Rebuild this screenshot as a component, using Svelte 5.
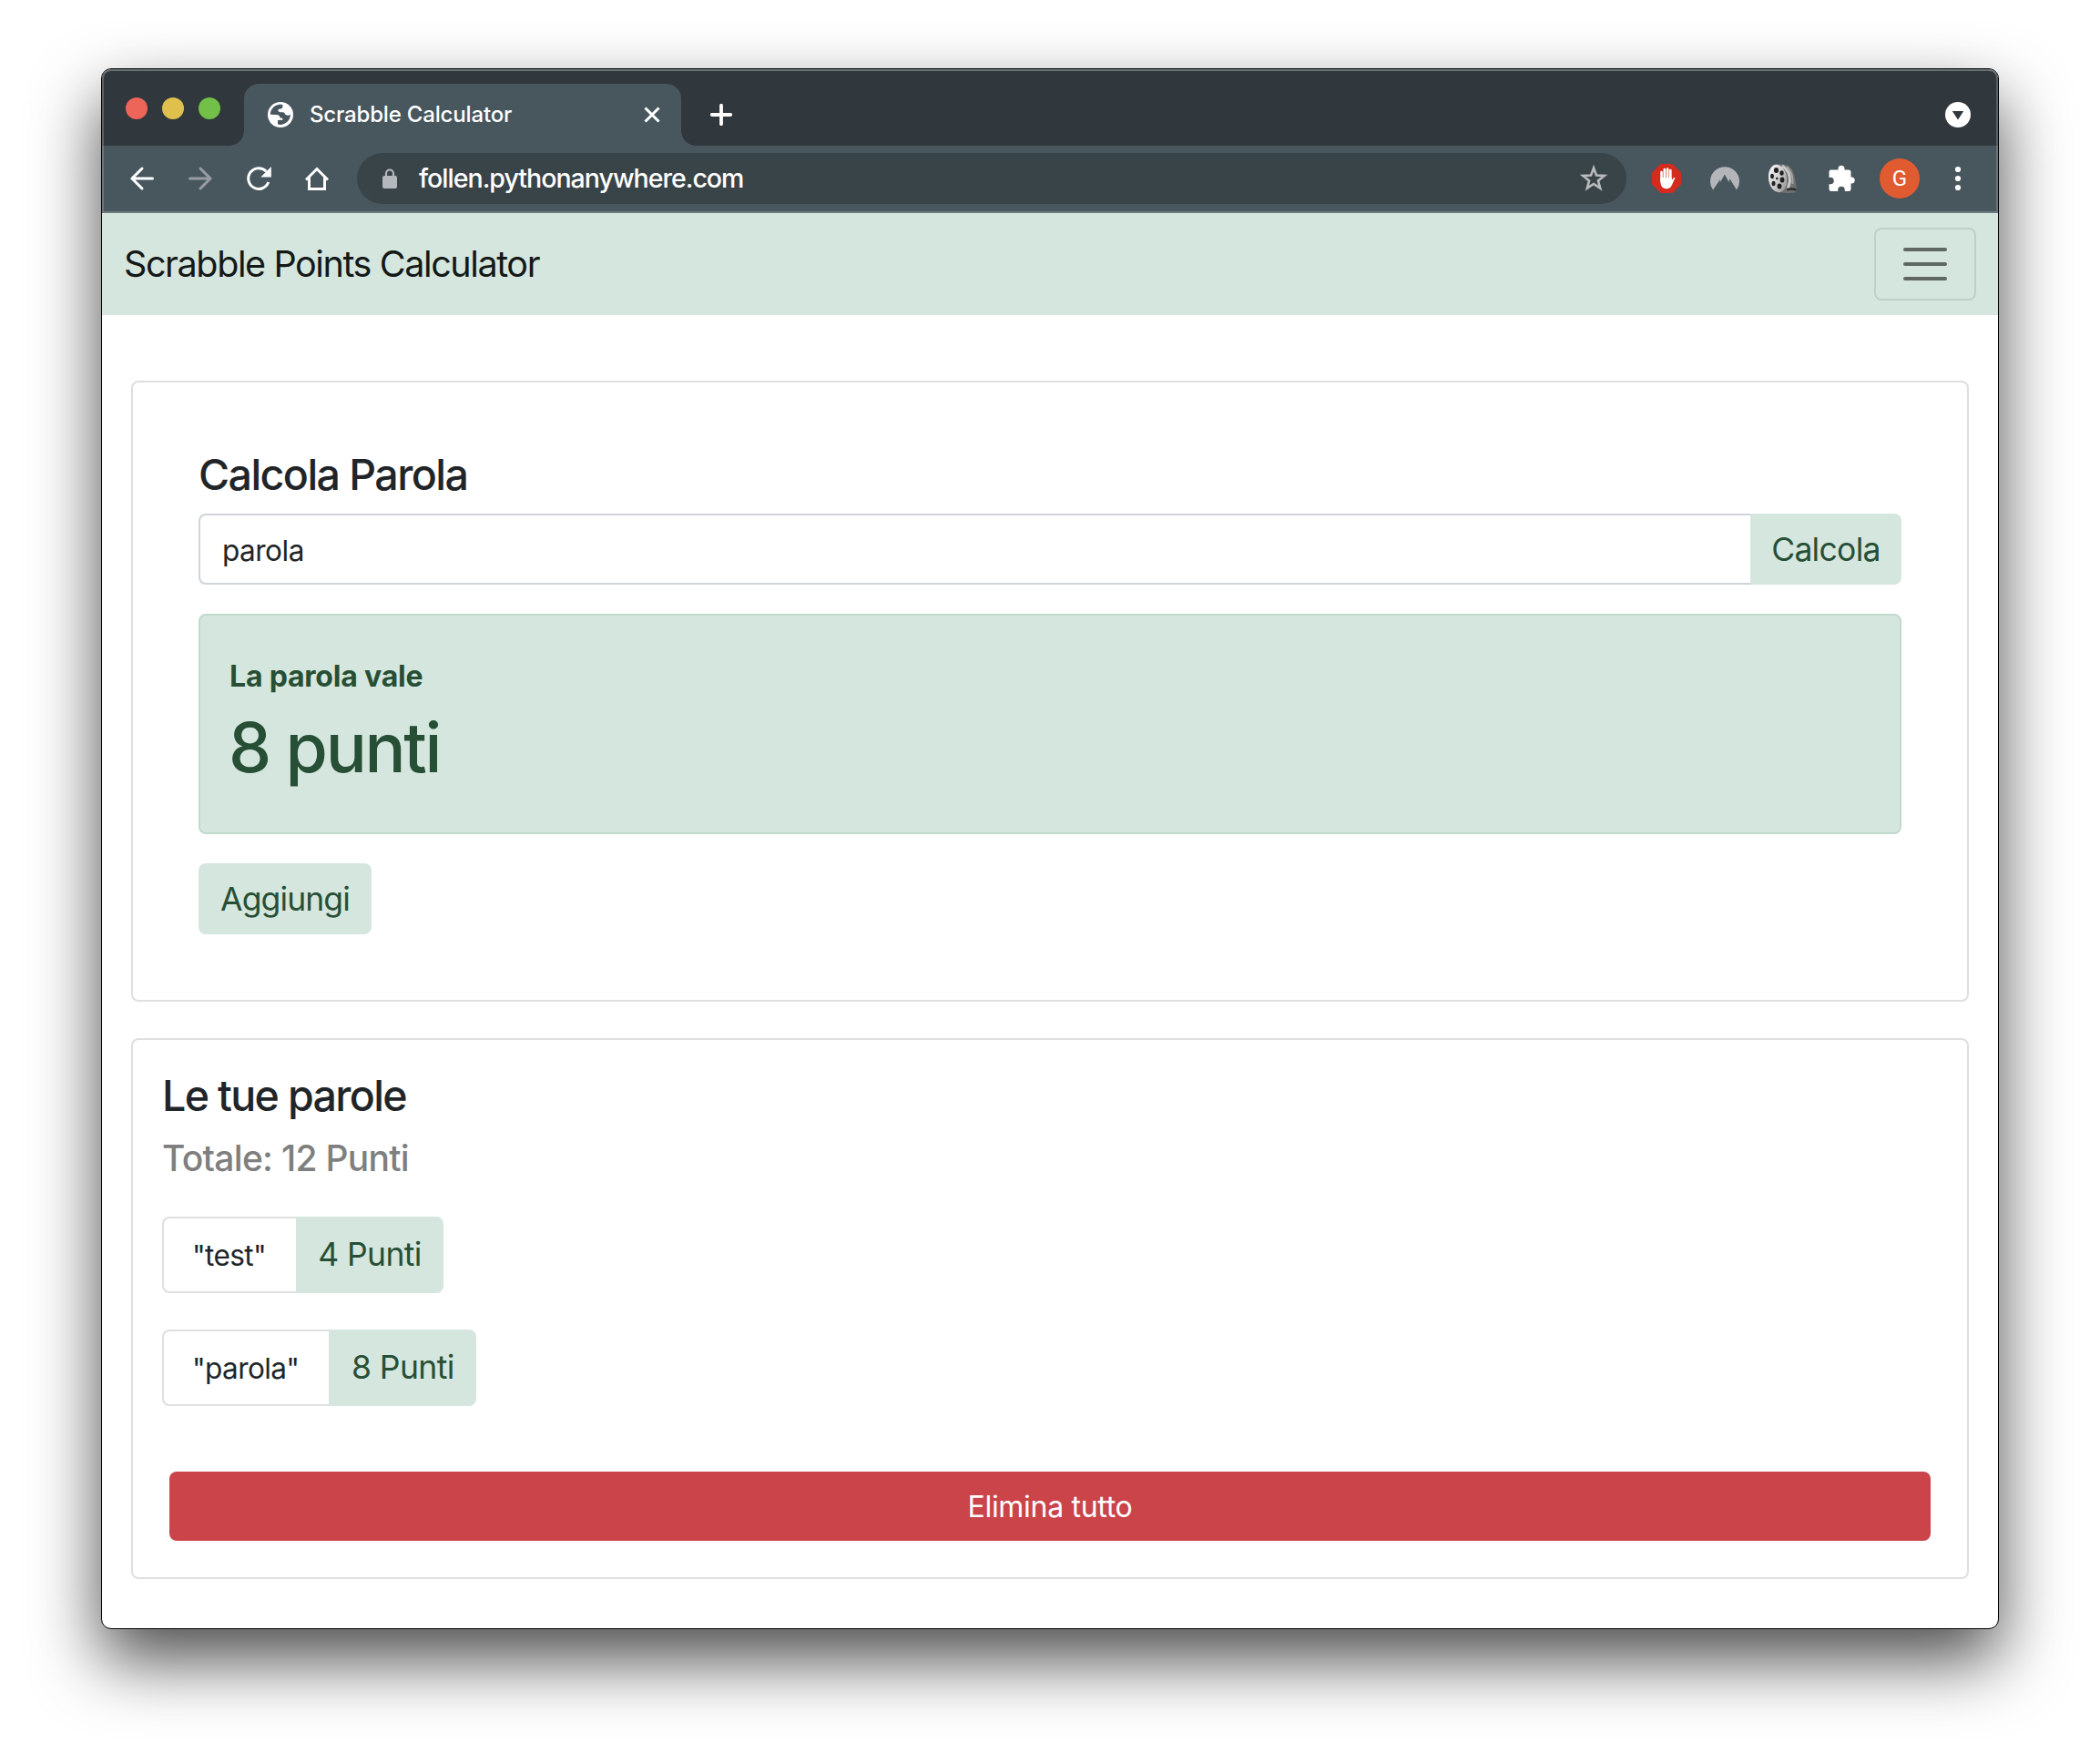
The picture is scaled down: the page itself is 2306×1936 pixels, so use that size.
<script>
  let word = $state('parola');
  const words = [
    { text: 'test', points: 4 },
    { text: 'parola', points: 8 }
  ];
  const total = words.reduce((sum, w) => sum + w.points, 0);
</script>

<div class="desktop">
  <div class="window">
    <header class="tabstrip">
      <div class="lights">
        <i class="close"></i><i class="min"></i><i class="max"></i>
      </div>
      <div class="tab">
        <svg class="globe" width="28" height="28" viewBox="0 0 28 28">
          <circle cx="14" cy="14" r="14" fill="#fff" />
          <path fill="#48565e" d="M10.800 3.200C6 4.400 2.800 9 2.900 13.700L9.500 13.900C12.500 14 13.300 15.200 13.500 17.400L14.800 17.500C16.500 17.700 16.600 18.700 16.400 19.800L11 20.100L11 24.600C18 26.300 24.500 21.500 25 13.800C23.600 14.800 21.300 15.200 19.600 14C18.600 12.800 18.600 11.200 16.600 11.200C14.600 11.400 11.500 11.500 11.400 9.600C11.300 7.600 13.500 7.600 15.600 7.300C16.300 6 16.200 4.300 16.600 3.200C15 2.700 13 2.700 10.800 3.200Z" />
        </svg>
        <span class="tabtitle">Scrabble Calculator</span>
        <svg width="20" height="20" viewBox="0 0 20 20"><path d="M2.500 2.500L17.500 17.500M17.500 2.500L2.500 17.500" stroke="#fff" stroke-width="3" /></svg>
      </div>
      <svg class="plus" width="24" height="24" viewBox="0 0 24 24"><path d="M12 1.800V22.200M1.800 12H22.200" stroke="#fff" stroke-width="3.800" stroke-linecap="round" /></svg>
      <svg class="drop" width="28" height="28" viewBox="0 0 28 28"><circle cx="14" cy="14" r="14" fill="#fff" /><path d="M7.800 10H20.200L14 19.500Z" fill="#30373d" /></svg>
    </header>

    <div class="toolbar">
      <div class="navicons">
        <svg width="32" height="32" viewBox="0 0 32 32" fill="none" stroke="#fff" stroke-width="3" stroke-linecap="round"><path d="M27.500 16H5M16 5L5 16L16 27" /></svg>
        <svg width="32" height="32" viewBox="0 0 32 32" fill="none" stroke="#979da3" stroke-width="3" stroke-linecap="round"><path d="M4.500 16H27M16 5L27 16L16 27" /></svg>
        <svg width="32" height="32" viewBox="0 0 32 32"><path d="M26.800 20A11.400 11.400 0 1 1 24.400 8.200" fill="none" stroke="#fff" stroke-width="3" /><path d="M29.800 3V14.500H18.300Z" fill="#fff" /></svg>
        <svg width="32" height="32" viewBox="0 0 32 32" fill="none" stroke="#fff" stroke-width="3"><path d="M4 17.500L16 5.500L28 17.500M7.500 15V27.500H24.500V15" /></svg>
      </div>
      <div class="omnibox">
        <svg class="lock" width="16" height="22" viewBox="0 0 16 22"><rect y="8" width="16" height="14" rx="2" fill="#b5b8bc" /><path d="M4 9V5.500A4 4 0 0 1 12 5.500V9" fill="none" stroke="#b5b8bc" stroke-width="2.200" /></svg>
        <span class="url">follen.pythonanywhere.com</span>
        <svg class="star" width="30" height="30" viewBox="0 0 30 30"><path d="M15 3.500L18 11.600L26.600 12L19.900 17.400L22.200 25.700L15 21L7.800 25.700L10.100 17.400L3.400 12L12 11.600Z" fill="none" stroke="#b9bbbd" stroke-width="2.600" /></svg>
      </div>
      <div class="extensions">
        <svg width="32" height="32" viewBox="0 0 32 32"><path d="M9.500 0H22.500L32 9.500V22.500L22.500 32H9.500L0 22.500V9.500Z" fill="#d32c1f" /><g stroke="#fff" stroke-linecap="round" stroke-width="2.700"><path d="M10.500 9V19M13.800 6V17M17.100 5.500V17M20.300 7V18" /></g><path d="M9.200 15H21.700V18L23.500 15.400Q25 13.800 25.400 15.600L21.500 24Q19.500 27.500 15.500 27.300Q10.500 27 9.600 21.500Z" fill="#fff" /></svg>
        <svg width="32" height="32" viewBox="0 0 32 32"><path d="M3 28.500A16 16 0 1 1 29 28.500L21.600 16.500L20.500 18.800L21 21L15.900 11.500L12.800 17L10.700 20.500L11 17Z" fill="#b3b5b9" /></svg>
        <svg width="32" height="32" viewBox="0 0 32 32">
          <defs>
            <linearGradient id="reel" x1="0" y1="0" x2="1" y2="1"><stop offset="0" stop-color="#fff" /><stop offset=".5" stop-color="#cfcfcf" /><stop offset="1" stop-color="#8c8c8c" /></linearGradient>
          </defs>
          <path d="M6 1Q15-1 22 2Q28 7 29 16L31 27L28 29L31 31Q22 33 12 31Z" fill="#707070" />
          <path d="M15 2Q24 8 23.500 19L21 28" fill="none" stroke="#c9c9c9" stroke-width="3" />
          <path d="M20 3Q27.500 10 26.500 22" fill="none" stroke="#a8a8a8" stroke-width="1.800" />
          <path d="M20 28Q25 27 30 28" fill="none" stroke="#2d2d2d" stroke-width="2.500" />
          <ellipse cx="10" cy="16" rx="10" ry="15.300" transform="rotate(-8 10 16)" fill="url(#reel)" />
          <g fill="#202020"><ellipse cx="8.500" cy="7" rx="2.600" ry="2.900" /><ellipse cx="14.500" cy="10" rx="2.200" ry="2.800" /><ellipse cx="4" cy="13.500" rx="1.900" ry="2.800" /><ellipse cx="15" cy="17.500" rx="2.400" ry="3.100" /><ellipse cx="5.500" cy="21.500" rx="2" ry="2.800" /><ellipse cx="12" cy="24.500" rx="2.400" ry="2.900" /><circle cx="9.300" cy="16" r="1.300" /></g>
        </svg>
        <svg width="32" height="32" viewBox="0 0 32 32"><path d="M4.500 6.500H12.500V5.200A3.500 3.500 0 0 1 19.500 5.200V6.500H24A2.500 2.500 0 0 1 26.500 9V14.500H27.200A3.500 3.500 0 0 1 27.200 21.500H26.500V27.500A2.500 2.500 0 0 1 24 30H19.800V28.500A3.800 3.800 0 0 0 12.200 28.500V30H5A2.500 2.500 0 0 1 2.500 27.500V22.300H4A3.800 3.800 0 0 0 4 14.700H2.500V8.500A2 2 0 0 1 4.500 6.500Z" fill="#fff" /></svg>
        <span class="avatar">G</span>
        <svg width="32" height="32" viewBox="0 0 32 32" fill="#fff"><circle cx="16" cy="6" r="3.100" /><circle cx="16" cy="16" r="3.100" /><circle cx="16" cy="26" r="3.100" /></svg>
      </div>
    </div>

    <nav class="navbar">
      <span class="brand">Scrabble Points Calculator</span>
      <button class="toggler" aria-label="Menu"><i></i><i></i><i></i></button>
    </nav>

    <main>
      <section class="card calc">
        <h1>Calcola Parola</h1>
        <div class="group">
          <input bind:value={word} aria-label="Parola" />
          <button class="soft">Calcola</button>
        </div>
        <div class="alert">
          <strong>La parola vale</strong>
          <div class="score">8 punti</div>
        </div>
        <button class="soft add">Aggiungi</button>
      </section>

      <section class="card list">
        <h2>Le tue parole</h2>
        <h3>Totale: {total} Punti</h3>
        {#each words as w}
          <div class="word">
            <span class="label">"{w.text}"</span>
            <span class="points">{w.points} Punti</span>
          </div>
        {/each}
        <button class="danger">Elimina tutto</button>
      </section>
    </main>
  </div>
</div>

<style>
  :global(body) { margin: 0; background: #fff; }
  * { box-sizing: border-box; }
  button, input { font: inherit; margin: 0; border: 0; }
  svg { display: block; flex: none; }
  .desktop {
    width: 2306px; height: 1936px; padding: 75px 111px; overflow: hidden;
    font-family: Inter, "Liberation Sans", sans-serif; color: #212529; background: #fff;
  }
  .window {
    width: 2084px; height: 1714px; border: 1px solid #000; border-radius: 11px;
    background: #fff; display: flex; flex-direction: column;
    box-shadow: 0 34px 74px rgba(0, 0, 0, .7);
  }
  .tabstrip {
    height: 84px; background: #30373d; border-radius: 10px 10px 0 0; display: flex; align-items: flex-end;
    box-shadow: inset 0 2px 0 #6b7276, inset 2px 0 0 #5a6166, inset -2px 0 0 #5a6166; padding: 0 30px 0 26px; flex: none;
  }
  .lights { display: flex; gap: 16px; align-self: center; width: 130px; margin-top: 2px; }
  .lights i { width: 24px; height: 24px; border-radius: 50%; }
  .close { background: #ed6459; }
  .min { background: #dfc04c; }
  .max { background: #72c047; }
  .tab {
    position: relative; width: 480px; height: 68px; border-radius: 16px 16px 0 0; background: #48565e;
    display: flex; align-items: center; padding: 0 22px 0 26px;
  }
  .tab::before, .tab::after { content: ""; position: absolute; bottom: 0; width: 16px; height: 16px; }
  .tab::before { left: -16px; background: radial-gradient(circle at 0 0, transparent 15.500px, #48565e 16px); }
  .tab::after { right: -16px; background: radial-gradient(circle at 100% 0, transparent 15.500px, #48565e 16px); }
  .tabtitle { margin-left: 18px; flex: 1; font-size: 24px; line-height: 34px; color: #fff; font-weight: 450; white-space: nowrap; letter-spacing: -.17px; }
  .plus { margin: 0 0 22px 32px; }
  .drop { margin: 0 0 20px auto; }
  .toolbar {
    height: 74px; flex: none; background: #48565e; border-bottom: 2px solid #6f7a81;
    box-shadow: inset 2px 0 0 #6a757c, inset -2px 0 0 #6a757c;
    display: flex; align-items: center; padding: 0 28px;
  }
  .navicons { display: flex; gap: 32px; width: 252px; }
  .omnibox { width: 1394px; height: 56px; border-radius: 28px; background: #394449; display: flex; align-items: center; padding: 0 21px 0 28px; }
  .url { flex: 1; margin-left: 24px; font-size: 28.500px; line-height: 40px; color: #fff; font-weight: 450; letter-spacing: -.98px; }
  .extensions { display: flex; align-items: center; gap: 32px; margin-left: 28px; }
  .avatar {
    width: 44px; height: 44px; margin: 0 -6px; border-radius: 50%; background: #e15b31; color: #fff;
    font: 24px/45px Roboto, sans-serif; text-align: center;
  }
  .navbar { height: 112px; flex: none; background: #d5e6de; display: flex; align-items: center; justify-content: space-between; padding: 0 24px; }
  .brand { font-size: 39.500px; line-height: 60px; color: #141817; letter-spacing: -1.400px; }
  .toggler {
    width: 112px; height: 80px; border: 2px solid #c0cfc8; border-radius: 8px; background: none; padding: 0 30px;
    display: flex; flex-direction: column; justify-content: center; gap: 12px;
  }
  .toggler i { height: 4px; border-radius: 2px; background: #5f6763; }
  main { padding: 72px 32px 0; display: flex; flex-direction: column; gap: 40px; }
  .card { border: 2px solid #dfdfdf; border-radius: 8px; background: #fff; display: flex; flex-direction: column; align-items: flex-start; }
  .calc { height: 682px; padding: 72px; }
  h1, h2, h3 { margin: 0; font-weight: 500; white-space: nowrap; }
  h1 { font-size: 46.500px; line-height: 58px; margin-bottom: 14px; letter-spacing: -1.550px; }
  .group { display: flex; align-self: stretch; height: 78px; }
  input {
    flex: 1; border: 2px solid #ced4da; border-right: 0; border-radius: 8px 0 0 8px; background: #fff;
    padding: 3px 24px 0; font-size: 31.500px; color: #212529; outline: none; letter-spacing: -.5px;
  }
  .soft { background: #d5e6de; color: #264f35; font-size: 35.500px; line-height: 54px; white-space: nowrap; padding: 2px 0 0; letter-spacing: -.7px; }
  .group .soft { width: 166px; border-radius: 0 8px 8px 0; }
  .alert {
    align-self: stretch; height: 242px; margin: 32px 0; border: 2px solid #c0dacd; border-radius: 8px;
    background: #d5e6de; color: #264f35; padding: 43px 32px;
  }
  strong { display: block; font-size: 32px; line-height: 48px; font-weight: 700; letter-spacing: -.2px; }
  .score { font-size: 75px; line-height: 96px; font-weight: 500; margin: 6px 0 0 -1px; letter-spacing: -2.300px; }
  .add { width: 190px; height: 78px; border-radius: 8px; letter-spacing: -.9px; }
  .list { height: 594px; padding: 32px; }
  h2 { font-size: 46.500px; line-height: 58px; letter-spacing: -1.650px; }
  h3 { font-size: 39px; line-height: 48px; margin: 16px 0 40px; color: #7f7f7f; letter-spacing: -.700px; }
  .word { display: flex; height: 84px; margin-bottom: 40px; }
  .label { border: 2px solid #dfdfdf; border-right: 0; border-radius: 8px 0 0 8px; padding: 1px 33px 0 31px; font-size: 31.500px; line-height: 80px; letter-spacing: -.6px; }
  .points { width: 162px; text-align: center; background: #d5e6de; color: #264f35; border-radius: 0 8px 8px 0; font-size: 35.500px; line-height: 84px; letter-spacing: -.6px; }
  .danger { align-self: stretch; height: 76px; margin: 32px 8px 0; border-radius: 8px; background: #cb444a; color: #fff; font-size: 32px; letter-spacing: -.3px; padding: 0; }
</style>
